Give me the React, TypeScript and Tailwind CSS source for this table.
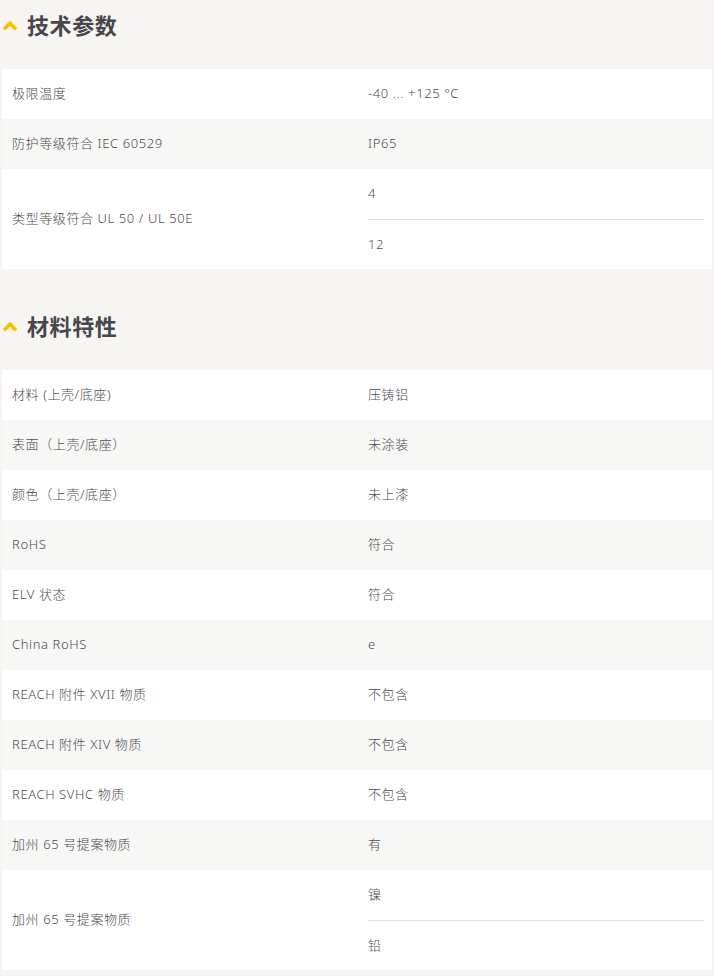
const TECH = [
  { k: '极限温度', v: ['-40 ... +125 °C'] },
  { k: '防护等级符合 IEC 60529', v: ['IP65'] },
  { k: '类型等级符合 UL 50 / UL 50E', v: ['4', '12'] },
];

const MATERIAL = [
  { k: '材料 (上壳/底座)', v: ['压铸铝'] },
  { k: '表面（上壳/底座）', v: ['未涂装'] },
  { k: '颜色（上壳/底座）', v: ['未上漆'] },
  { k: 'RoHS', v: ['符合'] },
  { k: 'ELV 状态', v: ['符合'] },
  { k: 'China RoHS', v: ['e'] },
  { k: 'REACH 附件 XVII 物质', v: ['不包含'] },
  { k: 'REACH 附件 XIV 物质', v: ['不包含'] },
  { k: 'REACH SVHC 物质', v: ['不包含'] },
  { k: '加州 65 号提案物质', v: ['有'] },
  { k: '加州 65 号提案物质', v: ['镍', '铅'] },
];

function ChevronUp() {
  return (
    <svg width="16" height="11" viewBox="0 0 16 11" className="shrink-0">
      <path d="M2 9.2 L8 3.2 L14 9.2" fill="none" stroke="#f7c100" strokeWidth="3.6" strokeLinejoin="miter" />
    </svg>
  );
}

function Section({ title, rows, first }: { title: string; rows: { k: string; v: string[] }[]; first?: boolean }) {
  return (
    <section className={first ? '' : 'mt-8'}>
      <div className="h-[69px] pt-[9px]">
        <h2 className="flex items-center h-8 pl-[2px] gap-[9px] text-[22px] leading-8 font-bold text-[#46464c]">
          <ChevronUp />
          <span>{title}</span>
        </h2>
      </div>
      <div className="mx-[2px]">
        {rows.map((r, i) => (
          <div key={i} className={`flex ${i % 2 === 0 ? 'bg-white' : 'bg-[#f7f7f5]'}`}>
            <div className="w-[366px] shrink-0 flex items-center pl-[10px]">{r.k}</div>
            <div className="flex-1 pr-[8px]">
              {r.v.map((v, j) => (
                <div
                  key={j}
                  className={`h-[50px] flex items-center ${j > 0 ? 'border-t border-[#e3e3e3]' : ''}`}
                >
                  {v}
                </div>
              ))}
            </div>
          </div>
        ))}
      </div>
    </section>
  );
}

export default function App() {
  return (
    <div
      className="min-h-[976px] bg-[#f6f5f2] text-[13px] font-light tracking-[0.6px] text-[#4b4b50]"
      style={{ fontFamily: '"Noto Sans", "Noto Sans CJK SC", sans-serif' }}
    >
      <Section title="技术参数" rows={TECH} first />
      <Section title="材料特性" rows={MATERIAL} />
    </div>
  );
}
